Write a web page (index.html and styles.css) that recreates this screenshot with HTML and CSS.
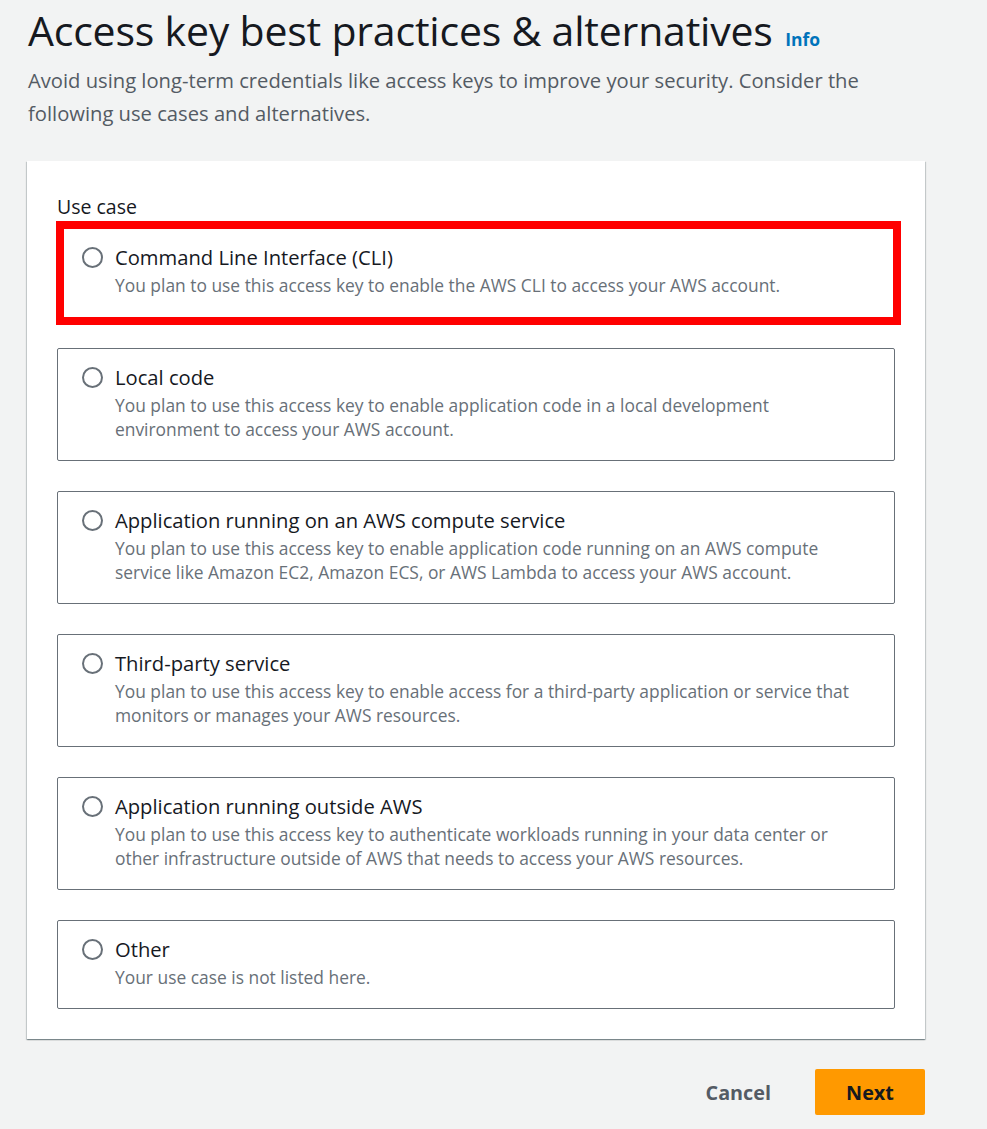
FILE: index.html
```html
<!DOCTYPE html>
<html lang="en">
<head>
<meta charset="utf-8">
<title>Access key best practices &amp; alternatives</title>
<link rel="stylesheet" href="styles.css">
</head>
<body>
<main class="page">
  <header class="head">
    <h1 class="title">Access key best practices &amp; alternatives <a class="info" href="#">Info</a></h1>
    <p class="lead">Avoid using long-term credentials like access keys to improve your security. Consider the following use cases and alternatives.</p>
  </header>

  <section class="card">
    <div class="label">Use case</div>
    <div class="options">
      <label class="option highlighted">
        <span class="radio"></span>
        <span class="text">
          <span class="opt-title">Command Line Interface (CLI)</span>
          <span class="opt-desc">You plan to use this access key to enable the AWS CLI to access your AWS account.</span>
        </span>
      </label>
      <label class="option">
        <span class="radio"></span>
        <span class="text">
          <span class="opt-title">Local code</span>
          <span class="opt-desc">You plan to use this access key to enable application code in a local development environment to access your AWS account.</span>
        </span>
      </label>
      <label class="option">
        <span class="radio"></span>
        <span class="text">
          <span class="opt-title">Application running on an AWS compute service</span>
          <span class="opt-desc">You plan to use this access key to enable application code running on an AWS compute service like Amazon EC2, Amazon ECS, or AWS Lambda to access your AWS account.</span>
        </span>
      </label>
      <label class="option">
        <span class="radio"></span>
        <span class="text">
          <span class="opt-title">Third-party service</span>
          <span class="opt-desc">You plan to use this access key to enable access for a third-party application or service that monitors or manages your AWS resources.</span>
        </span>
      </label>
      <label class="option">
        <span class="radio"></span>
        <span class="text">
          <span class="opt-title">Application running outside AWS</span>
          <span class="opt-desc">You plan to use this access key to authenticate workloads running in your data center or other infrastructure outside of AWS that needs to access your AWS resources.</span>
        </span>
      </label>
      <label class="option">
        <span class="radio"></span>
        <span class="text">
          <span class="opt-title">Other</span>
          <span class="opt-desc">Your use case is not listed here.</span>
        </span>
      </label>
    </div>
  </section>

  <footer class="actions">
    <button class="btn btn-link" type="button">Cancel</button>
    <button class="btn btn-primary" type="button">Next</button>
  </footer>
</main>
</body>
</html>
```

FILE: styles.css
```css
* { box-sizing: border-box; }

html, body {
  margin: 0;
  padding: 0;
  background: #f2f3f3;
}

body {
  font-family: "Open Sans", "Noto Sans", sans-serif;
  color: #16191f;
}

.page {
  width: 925px;
  padding: 8px 0 0 28px;
}

.title {
  margin: 0;
  font-size: 41px;
  line-height: 44px;
  font-weight: 400;
  color: #16191f;
  letter-spacing: -0.2px;
}

.info {
  font-size: 17.5px;
  font-weight: 700;
  color: #0073bb;
  text-decoration: none;
  margin-left: 2px;
  letter-spacing: 0;
}

.lead {
  margin: 3px 0 0;
  font-size: 20.2px;
  line-height: 33px;
  color: #545b64;
  max-width: 860px;
}

.card {
  margin: 31px 0 0 -1px;
  width: 898px;
  background: #fff;
  padding: 34px 30px 30px 30px;
  box-shadow: 0 1px 1px 0 rgba(0, 28, 36, 0.3), 1px 1px 1px 0 rgba(0, 28, 36, 0.15), -1px 1px 1px 0 rgba(0, 28, 36, 0.15);
}

.label {
  font-size: 19.5px;
  line-height: 24px;
  color: #16191f;
  margin-bottom: 8px;
}

.options {
  display: flex;
  flex-direction: column;
  gap: 30px;
}

.option {
  position: relative;
  display: flex;
  align-items: flex-start;
  gap: 12px;
  border: 1px solid #687078;
  border-radius: 2px;
  padding: 14px 20px 19px 24px;
  cursor: pointer;
}

.option.highlighted {
  padding-top: 15px;
  padding-bottom: 20px;
}

.option.highlighted::after {
  content: "";
  position: absolute;
  top: -7px;
  left: -2px;
  right: -7px;
  bottom: -8px;
  border: 8px solid #ff0000;
  pointer-events: none;
}

.radio {
  flex: none;
  width: 21px;
  height: 21px;
  margin-top: 4px;
  border: 2px solid #687078;
  border-radius: 50%;
  background: #fff;
}

.text {
  display: flex;
  flex-direction: column;
}

.opt-title {
  font-size: 20.2px;
  line-height: 28px;
  color: #16191f;
}

.opt-desc {
  margin-top: 2px;
  font-size: 17.4px;
  line-height: 24px;
  color: #687078;
}

.actions {
  display: flex;
  justify-content: flex-end;
  align-items: center;
  gap: 24px;
  width: 898px;
  margin: 30px 0 0 -1px;
}

.btn {
  font-family: "Open Sans", "Noto Sans", sans-serif;
  font-size: 19.8px;
  font-weight: 700;
  border: none;
  border-radius: 2px;
  cursor: pointer;
}

.btn-link {
  background: transparent;
  color: #545b64;
  padding: 0 20px;
  height: 46px;
}

.btn-primary {
  background: #ff9900;
  color: #16191f;
  width: 110px;
  height: 46px;
}
```
